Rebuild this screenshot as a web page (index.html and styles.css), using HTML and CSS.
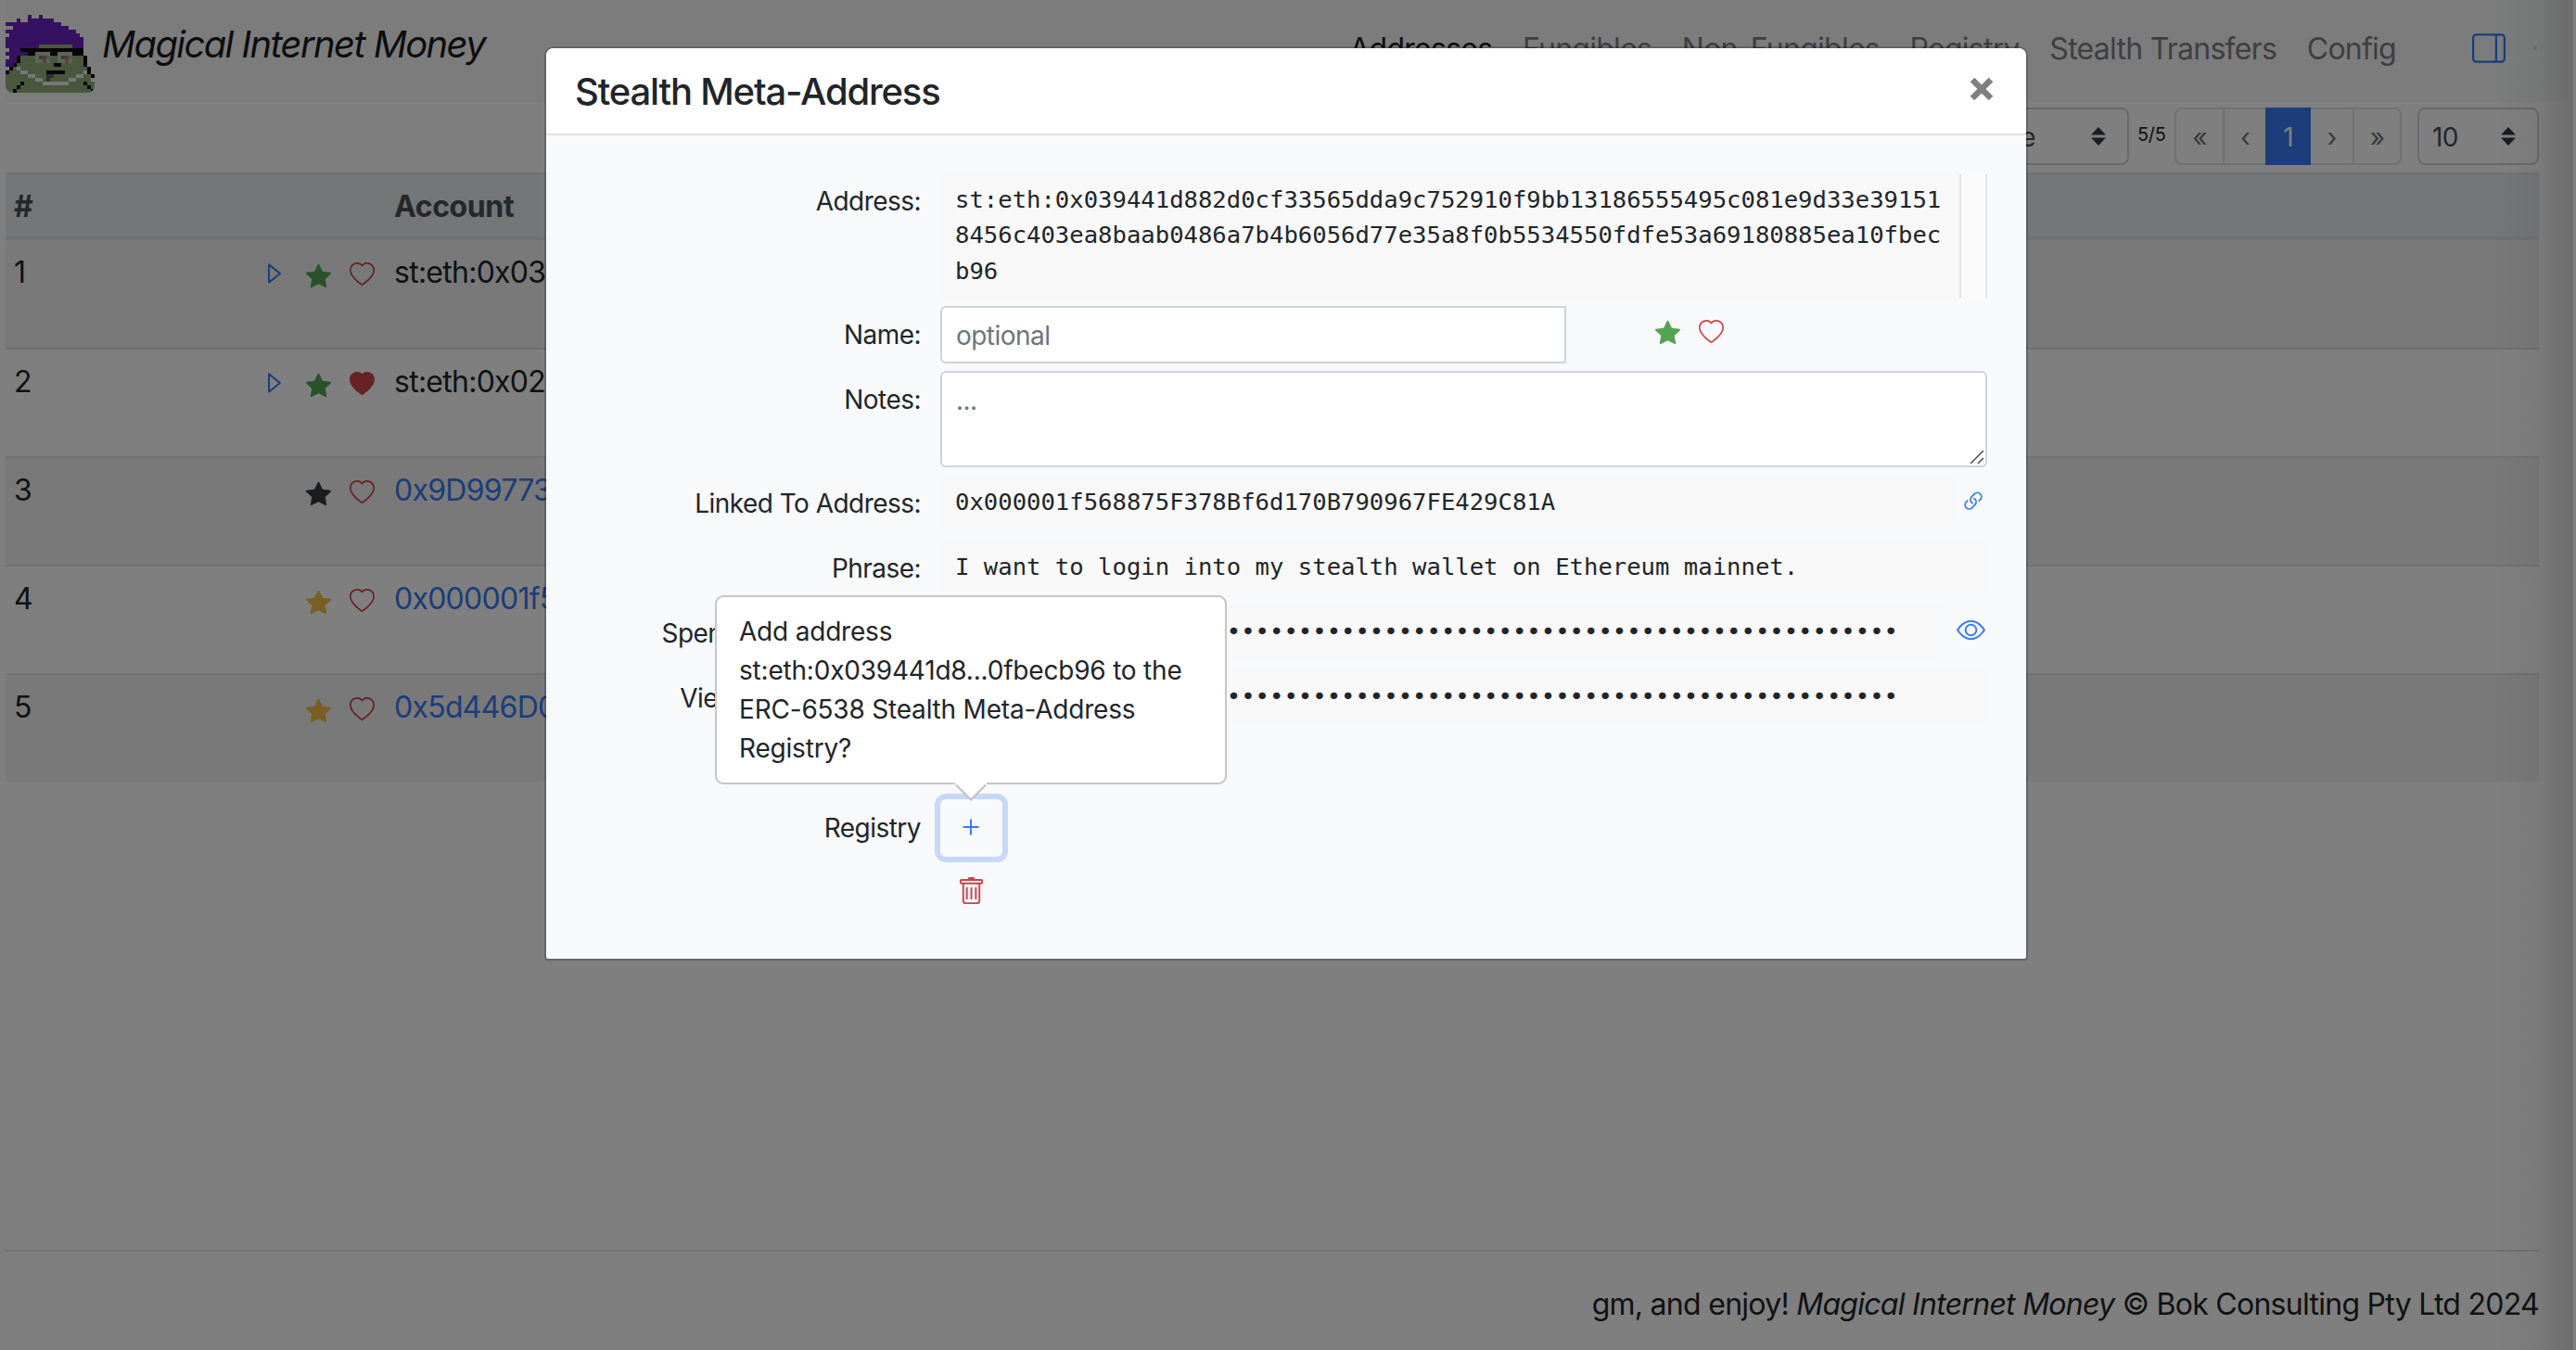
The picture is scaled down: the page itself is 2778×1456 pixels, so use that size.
FILE: index.html
```
<!DOCTYPE html>
<html lang="en">
<head>
<meta charset="utf-8">
<title>Magical Internet Money</title>
<link rel="stylesheet" href="styles.css">
</head>
<body>
<svg class="sprite" aria-hidden="true">
  <symbol id="heart" viewBox="0 0 16 16"><path d="m8 2.748-.717-.737C5.6.281 2.514.878 1.4 3.053c-.523 1.023-.641 2.5.314 4.385.92 1.815 2.834 3.989 6.286 6.357 3.452-2.368 5.365-4.542 6.286-6.357.955-1.886.838-3.362.314-4.385C13.486.878 10.4.28 8.717 2.01zM8 15C-7.333 4.868 3.279-3.04 7.824 1.143q.09.083.176.171a3 3 0 0 1 .176-.17C12.72-3.042 23.333 4.867 8 15"/></symbol>
  <symbol id="heart-fill" viewBox="0 0 16 16"><path fill-rule="evenodd" d="M8 1.314C12.438-3.248 23.534 4.735 8 15-7.534 4.736 3.562-3.248 8 1.314"/></symbol>
  <symbol id="star" viewBox="0 0 16 16"><path d="M3.612 15.443c-.386.198-.824-.149-.746-.592l.83-4.73L.173 6.765c-.329-.314-.158-.888.283-.95l4.898-.696L7.538.792c.197-.39.73-.39.927 0l2.184 4.327 4.898.696c.441.062.612.636.282.95l-3.522 3.356.83 4.73c.078.443-.36.79-.746.592L8 13.187l-4.389 2.256z"/></symbol>
  <symbol id="caret" viewBox="0 0 16 24"><path d="M2 2.4v19.2L14 12z" fill="none" stroke="currentColor" stroke-width="2" stroke-linejoin="round"/></symbol>
  <symbol id="updown" viewBox="0 0 16 20"><path d="M8 0l8 8.5H0zM8 20l8-8.500H0z"/></symbol>
</svg>

<div class="page">
  <nav class="navbar">
    <svg class="logo" viewBox="0 0 24 24" shape-rendering="crispEdges">
      <path fill="#93ae7d" d="M4 11h17v4h1v3h1v3h1v3H0v-5h1v-1h1v-1h1v-3h1z"/>
      <path fill="#6c22c3" d="M6 3h1v1H6zM9 3h1v1H9zM3 4h1v1H3zM6 4h7v1H6zM0 5h15v1H0zM2 6h15v1H2zM0 7h19v1H0zM1 8h19v1H1zM0 9h21v2H0zM0 11h9v1H0zM18 11h3v1H18zM1 12h3v1H1zM0 13h6v1H0zM1 14h2v1H1zM0 15h3v1H0zM0 16h2v1H0z"/>
      <path fill="#0c0c0c" d="M4 12h17v1H4zM6 13h2v1H6zM12 13h2v1h-2zM18 13h3v1h-3zM3 14h1v2H3zM21 14h1v3h-1zM2 16h1v1H2zM1 17h1v1H1zM0 18h1v1H0zM22 17h1v2h-1zM23 19h1v1h-1zM13 16h2v1h-2zM11 18h5v1h-5zM4 21h1v1H4zM3 22h1v1H3zM2 23h1v1H2zM21 21h1v1h-1zM22 22h1v1h-1zM23 23h1v1h-1z"/>
      <path fill="#bdcbb2" d="M8 13h4v3H8zM14 13h4v3h-4z"/>
      <path fill="#a4b39a" d="M9 14h3v1H9zM15 14h3v1h-3z"/>
      <path fill="#77776f" d="M9 14h1v1H9zM15 14h1v1h-1z"/>
      <path fill="#c0736c" d="M10 14h1v1h-1zM16 14h1v1h-1z"/>
      <path fill="#8f9a86" d="M10 15h1v1h-1zM16 15h1v1h-1z"/>
      <path fill="#eeeeee" d="M3 17h1v1H3zM4 18h2v1H4zM6 19h2v1H6zM8 20h2v1H8zM10 21h7v1h-7zM17 20h2v1h-2zM19 19h2v1h-2zM21 18h1v1h-1z"/>
      <path fill="#56654a" d="M11 19h2v1h-2zM11 20h1v1h-1z"/>
    </svg>
    <span class="brand">Magical Internet Money</span>
    <div class="nav-links">
      <a class="nav-link active">Addresses</a>
      <a class="nav-link">Fungibles</a>
      <a class="nav-link">Non-Fungibles</a>
      <a class="nav-link">Registry</a>
      <a class="nav-link">Stealth Transfers</a>
      <a class="nav-link">Config</a>
    </div>
    <svg class="sidebar-icon" viewBox="0 0 16 16"><path d="M16 3a2 2 0 0 0-2-2H2a2 2 0 0 0-2 2v10a2 2 0 0 0 2 2h12a2 2 0 0 0 2-2zm-5-1v12H2a1 1 0 0 1-1-1V3a1 1 0 0 1 1-1zm1 0h2a1 1 0 0 1 1 1v10a1 1 0 0 1-1 1h-2z"/></svg>
    <span class="status-dot"></span>
  </nav>

  <div class="toolbar">
    <div class="select sort"><span>Name</span><svg class="updown"><use href="#updown"/></svg></div>
    <span class="count">5/5</span>
    <div class="pagination">
      <span class="first">«</span><span class="prev">‹</span><span class="current">1</span><span class="next">›</span><span class="last">»</span>
    </div>
    <div class="select size"><span>10</span><svg class="updown"><use href="#updown"/></svg></div>
  </div>

  <div class="table">
    <div class="tr head"><span class="num">#</span><span class="icons"></span><span>Account</span></div>
    <div class="tr odd"><span class="num">1</span><span class="icons"><svg class="caret"><use href="#caret"/></svg><svg class="star green"><use href="#star"/></svg><svg class="heart"><use href="#heart"/></svg></span><span>st:eth:0x03</span></div>
    <div class="tr"><span class="num">2</span><span class="icons"><svg class="caret"><use href="#caret"/></svg><svg class="star green"><use href="#star"/></svg><svg class="heart"><use href="#heart-fill"/></svg></span><span>st:eth:0x02</span></div>
    <div class="tr odd"><span class="num">3</span><span class="icons"><svg class="star dark"><use href="#star"/></svg><svg class="heart"><use href="#heart"/></svg></span><a class="link">0x9D99773</a></div>
    <div class="tr"><span class="num">4</span><span class="icons"><svg class="star gold"><use href="#star"/></svg><svg class="heart"><use href="#heart"/></svg></span><a class="link">0x000001f5</a></div>
    <div class="tr odd"><span class="num">5</span><span class="icons"><svg class="star gold"><use href="#star"/></svg><svg class="heart"><use href="#heart"/></svg></span><a class="link">0x5d446D0</a></div>
  </div>

  <footer class="footer">gm, and enjoy! <i>Magical Internet Money</i> © Bok Consulting Pty Ltd 2024</footer>
</div>

<div class="edge-shade"></div>
<div class="backdrop">
  <div class="modal">
    <header class="modal-header">
      <h5 class="modal-title">Stealth Meta-Address</h5>
      <svg class="close" viewBox="0 0 26 26"><path d="M3 3l20 20M23 3L3 23"/></svg>
    </header>
    <div class="modal-body">
      <div class="row">
        <label>Address:</label>
        <div class="mono">st:eth:0x039441d882d0cf33565dda9c752910f9bb13186555495c081e9d33e391518456c403ea8baab0486a7b4b6056d77e35a8f0b5534550fdfe53a69180885ea10fbecb96</div>
        <div class="scroll-track"></div>
      </div>
      <div class="row">
        <label>Name:</label>
        <div class="input name">optional</div>
        <svg class="star green"><use href="#star"/></svg>
        <svg class="heart"><use href="#heart"/></svg>
      </div>
      <div class="row">
        <label>Notes:</label>
        <div class="input notes">...<svg class="grip" viewBox="0 0 16 16"><path d="M1 15L15 1M9 15l6-6"/></svg></div>
      </div>
      <div class="row single">
        <label>Linked To Address:</label>
        <div class="mono linked">0x000001f568875F378Bf6d170B790967FE429C81A</div>
        <svg class="link-icon" viewBox="0 0 16 16"><path d="M4.715 6.542 3.343 7.914a3 3 0 1 0 4.243 4.243l1.828-1.829A3 3 0 0 0 8.586 5.500L8 6.086a1 1 0 0 0-.154.199 2 2 0 0 1 .861 3.337L6.880 11.450a2 2 0 1 1-2.830-2.830l.793-.792a4 4 0 0 1-.128-1.287z"/><path d="M6.586 4.672A3 3 0 0 0 7.414 9.500l.775-.776a2 2 0 0 1-.896-3.346L9.120 3.550a2 2 0 1 1 2.830 2.830l-.793.792c.112.420.155.855.128 1.287l1.372-1.372a3 3 0 1 0-4.243-4.243z"/></svg>
      </div>
      <div class="row single">
        <label>Phrase:</label>
        <div class="mono">I want to login into my stealth wallet on Ethereum mainnet.</div>
      </div>
      <div class="row single">
        <label>Spending Private Key:</label>
        <div class="mono spending">••••••••••••••••••••••••••••••••••••••••••••••••••••••••••••••••••</div>
        <svg class="eye-icon" viewBox="0 0 16 16"><path d="M16 8s-3-5.500-8-5.500S0 8 0 8s3 5.500 8 5.500S16 8 16 8M1.173 8a13 13 0 0 1 1.660-2.043C4.120 4.668 5.880 3.500 8 3.500s3.879 1.168 5.168 2.457A13 13 0 0 1 14.828 8q-.086.130-.195.288c-.335.480-.830 1.120-1.465 1.755C11.879 11.332 10.119 12.500 8 12.500s-3.879-1.168-5.168-2.457A13 13 0 0 1 1.172 8z"/><path d="M8 5.500a2.500 2.500 0 1 0 0 5 2.500 2.500 0 0 0 0-5M4.500 8a3.500 3.500 0 1 1 7 0 3.500 3.500 0 0 1-7 0"/></svg>
      </div>
      <div class="row single">
        <label>Viewing Private Key:</label>
        <div class="mono">••••••••••••••••••••••••••••••••••••••••••••••••••••••••••••••••••</div>
      </div>
      <div class="row registry">
        <label>Registry</label>
        <div class="add-wrap">
          <div class="add"><svg viewBox="0 0 18 18"><path d="M9 0.500v17M0.500 9h17"/></svg></div>
          <div class="popover">Add address st:eth:0x039441d8...0fbecb96 to the ERC-6538 Stealth Meta-Address Registry?
            <svg class="arrow" viewBox="0 0 34 20"><path class="fill" d="M0 0h34v2h-1L17 18.500 1 2H0z"/><path class="line" d="M1 2.500L17 18.500 33 2.500"/></svg>
          </div>
        </div>
      </div>
      <div class="row trash-row">
        <svg class="trash" viewBox="0 0 16 16"><path d="M5.500 5.500A.500.500 0 0 1 6 6v6a.500.500 0 0 1-1 0V6a.500.500 0 0 1 .500-.500m2.500 0a.500.500 0 0 1 .500.500v6a.500.500 0 0 1-1 0V6a.500.500 0 0 1 .500-.500m3 .500a.500.500 0 0 0-1 0v6a.500.500 0 0 0 1 0z"/><path d="M14.500 3a1 1 0 0 1-1 1H13v9a2 2 0 0 1-2 2H5a2 2 0 0 1-2-2V4h-.500a1 1 0 0 1-1-1V2a1 1 0 0 1 1-1H6a1 1 0 0 1 1-1h2a1 1 0 0 1 1 1h3.500a1 1 0 0 1 1 1zM4.118 4 4 4.059V13a1 1 0 0 0 1 1h6a1 1 0 0 0 1-1V4.059L11.882 4zM2.500 3h11V2h-11z"/></svg>
      </div>
    </div>
  </div>
</div>
</body>
</html>
```
FILE: styles.css
```
* { box-sizing: border-box; }

body {
  margin: 0;
  height: 1456px;
  overflow: hidden;
  position: relative;
  background: #fff;
  color: #212529;
  font: 32px/48px Inter, "Liberation Sans", sans-serif;
  letter-spacing: -0.74px;
}

svg { display: block; flex: none; fill: currentColor; }
.sprite { position: absolute; width: 0; height: 0; }

.page { display: flex; flex-direction: column; height: 1456px; padding: 0 40px 0 6px; }

/* Navigation */
.navbar {
  display: flex;
  align-items: flex-start;
  height: 110px;
  margin-right: -30px;
  padding: 4px 30px 0 0;
  background: #f8f9fa;
}
.logo { width: 96px; height: 96px; border-radius: 8px; }
.brand {
  margin: 14px 0 0 8px;
  font-size: 40px;
  line-height: 60px;
  font-style: italic;
  letter-spacing: -1.62px;
  color: #1a1a1a;
}
.nav-links { display: flex; gap: 32.6px; margin: 25px 82px 0 auto; }
.nav-link { color: #7e7f7f; white-space: nowrap; }
.nav-link.active { color: #1a1a1a; }
.sidebar-icon { width: 36px; height: 36px; margin-top: 30px; color: #387bf5; }
.status-dot { width: 4px; height: 4px; margin: 46px 2px 0 30px; border-radius: 2px; background: #ccd8cc; }

/* List controls */
.toolbar { display: flex; justify-content: flex-end; height: 62px; margin: 6px 0 8px; font-size: 28px; line-height: 42px; }
.select {
  display: flex;
  justify-content: space-between;
  align-items: flex-start;
  border: 2px solid #ced4da;
  border-radius: 8px;
  padding: 9px 23px 0 14px;
  color: #495057;
}
.sort { width: 221px; padding-left: 43px; }
.size { width: 131px; margin-left: 17px; }
.updown { width: 16px; height: 20px; margin-top: 10px; color: #343a40; }
.count { width: 49px; padding: 9px 0 0 9px; font-size: 20px; line-height: 40px; letter-spacing: -0.3px; }
.pagination { display: flex; width: 245px; border: 2px solid #dee2e6; border-radius: 8px; color: #6c757d; text-align: center; }
.pagination span { padding-top: 9px; }
.first { width: 52px; border-right: 2px solid #dee2e6; }
.prev { width: 44px; }
.pagination .current { width: 49px; margin: -2px 0; padding-top: 11px; background: #387bf5; color: #fff; }
.next { width: 47px; border-right: 2px solid #dee2e6; }
.last { flex: 1; }

/* Accounts */
.tr {
  display: grid;
  grid-template-columns: 200px 200px 1fr;
  height: 117px;
  padding: 11px 10px 0 9px;
  border-top: 2px solid #dee2e6;
}
.tr > :last-child { padding-left: 10px; }
.head { height: 73px; border-bottom: 4px solid #dee2e6; background: #e9ecef; color: #495057; font-weight: 700; letter-spacing: -0.4px; }
.head + .tr { height: 116px; border-top: 0; }
.odd { background: #f2f2f2; }
.icons { display: flex; justify-content: flex-end; gap: 20px; padding: 13px 11px 0 0; }
.caret { width: 16px; height: 24px; margin-right: 6px; color: #387bf5; }
.star { width: 27px; height: 27px; }
.icons .star { margin-top: 1px; }
.heart { width: 27px; height: 27px; color: #cc4448; }
.green { color: #52a550; }
.dark { color: #343a40; }
.gold { color: #f3bf43; }
.link { color: #387bf5; }

.footer { margin-top: auto; height: 108px; padding-top: 33px; border-top: 2px solid #e5e5e5; text-align: right; letter-spacing: -0.72px; }

.edge-shade {
  position: absolute;
  inset: 0 0 0 auto;
  width: 90px;
  border-right: 3px solid #fff;
  background: linear-gradient(90deg, rgba(0,0,0,0), rgba(0,0,0,.04) 55%, rgba(0,0,0,.14));
}

/* Modal */
.backdrop { position: absolute; inset: 0; padding: 50px 0 0 587px; background: rgba(0,0,0,.5); }
.modal {
  width: 1600px;
  height: 986px;
  border: 2px solid rgba(0,0,0,.2);
  border-radius: 10px 10px 4px 4px;
  background: #f8f9fb;
  background-clip: padding-box;
}
.modal-header {
  display: flex;
  justify-content: space-between;
  height: 94px;
  padding: 23px 35px 0 31px;
  border-bottom: 2px solid #dee2e6;
  border-radius: 8px 8px 0 0;
  background: #fff;
}
.modal-title { margin: 0; font-size: 40px; line-height: 48px; font-weight: 550; letter-spacing: -1.18px; }
.close { width: 26px; height: 26px; margin-top: 8px; fill: none; stroke: #7f7f7f; stroke-width: 6.5; }
.modal-body { display: flex; flex-direction: column; gap: 8px; padding: 40px 42px 0 0; font-size: 28px; line-height: 42px; letter-spacing: -0.54px; }
.row { display: flex; align-items: flex-start; }
.row label { width: 404px; margin-right: 21px; padding-top: 10px; text-align: right; white-space: nowrap; }
.single { height: 62px; }
.mono {
  flex: 1;
  padding: 10px 16px;
  border-radius: 6px;
  background: #f8f8f8;
  font: 25.6px/38.4px "DejaVu Sans Mono", monospace;
  letter-spacing: 0;
  word-break: break-all;
}
.row:first-child .mono { height: 136px; }
.scroll-track { width: 30px; height: 133px; margin-top: 2px; border: solid #e6e6e6; border-width: 0 2px; background: #fafafa; }
.input { border: 2px solid #ced4da; border-radius: 6px; padding: 9px 15px; background: #fff; color: #6c757d; }
.name { width: 675px; height: 62px; border-radius: 6px 0 0 6px; margin-right: 96px; }
.row > .star { margin-top: 15px; }
.row > .heart { margin: 15px 0 0 20px; }
.notes { position: relative; flex: 1; height: 104px; }
.grip { position: absolute; right: 1px; bottom: 1px; width: 16px; height: 16px; fill: none; stroke: #555; stroke-width: 1.6; }
.linked { margin-right: 7px; }
.link-icon { width: 28px; height: 28px; margin: 15px 1px 0 0; color: #387bf5; }
.spending { margin-right: 15px; }
.eye-icon { width: 31px; height: 31px; margin: 12px 2px 0 0; color: #387bf5; }
.registry { margin-top: 70px; }
.add-wrap { position: relative; }
.add {
  display: flex;
  align-items: center;
  justify-content: center;
  width: 67px;
  height: 62px;
  border-radius: 6px;
  box-shadow: 0 0 0 6px #c6d9f9;
}
.add svg { width: 18px; height: 18px; margin: 0 1px 2px 0; fill: none; stroke: #387bf5; stroke-width: 2; }
.popover {
  position: absolute;
  left: -243px;
  bottom: 78px;
  width: 552px;
  height: 204px;
  padding: 16px 20px 0 24px;
  border: 2px solid #c6c6c8;
  border-radius: 9px;
  background: #fff;
  letter-spacing: -0.2px;
}
.arrow { position: absolute; left: 257px; bottom: -20px; width: 34px; height: 20px; }
.arrow .fill { fill: #fff; }
.arrow .line { fill: none; stroke: #c0c0c2; stroke-width: 2; }
.trash-row { padding: 14px 0 0 443px; color: #cc4448; }
.trash { width: 31px; height: 31px; }
```
